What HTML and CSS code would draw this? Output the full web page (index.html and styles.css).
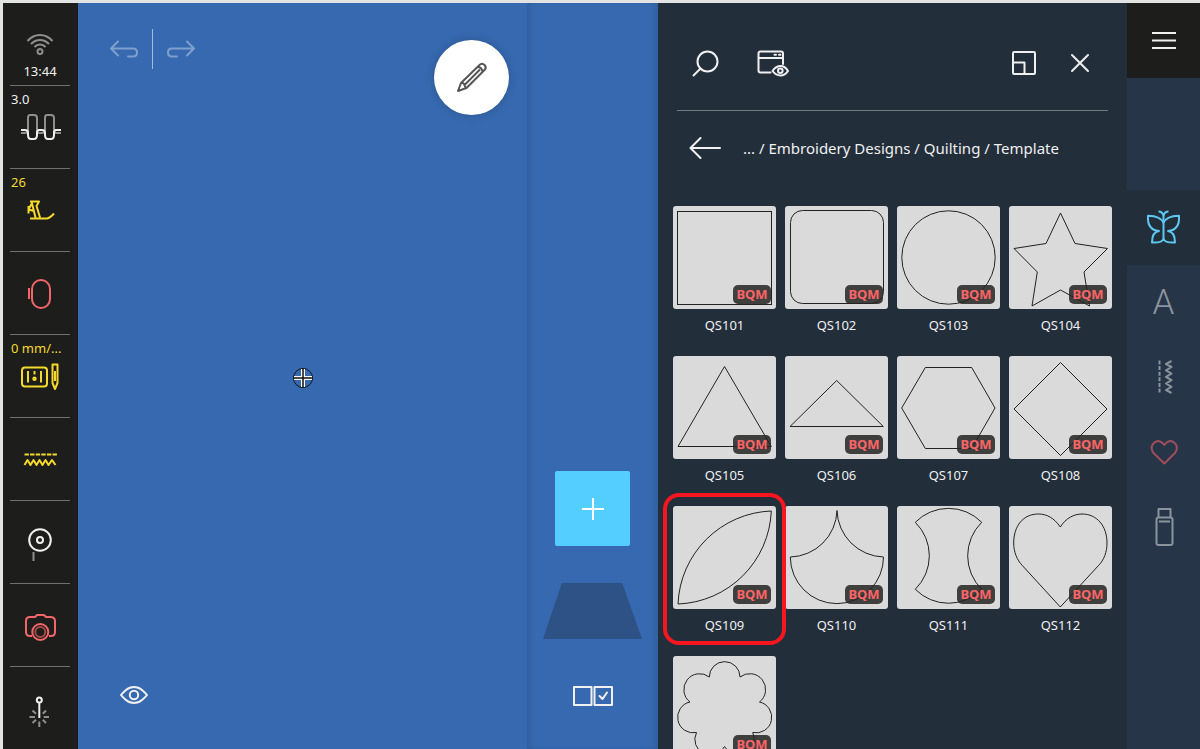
FILE: index.html
```html
<!DOCTYPE html>
<html lang="en">
<head>
    <meta charset="UTF-8">
    <meta name="viewport" content="width=device-width, initial-scale=1.0">
    <title>Embroidery Designs</title>
    <link rel="stylesheet" href="styles.css">
</head>
<body>

<div class="app">
    <!-- Left Sidebar: machine settings -->
    <aside class="settings">
        <button class="setting clock" aria-label="Wi-Fi and time">
            <svg width="28" height="24" viewBox="0 0 28 24">
                <path d="M1.500 8C8.500 0 19.500 0 26.500 8M5 11C10 5.500 18 5.500 23 11M8.500 14C11.500 10.700 16.500 10.700 19.500 14"/>
                <circle cx="14" cy="18.500" r="2.500"/>
            </svg>
            <span>13:44</span>
        </button>
        <button class="setting" aria-label="Thread tension">
            <span class="value">3.0</span>
            <svg width="45" height="46" viewBox="0 0 45 46">
                <path class="dim" d="M3 29H7Q10 29 10 26V14Q10 11 12 11H16Q19 11 19 14V26Q19 29 21 29H24Q27 29 27 26V14Q27 11 29 11H33Q36 11 36 14V26Q36 29 38 29H43"/>
                <path d="M3 26H7Q10 26 10 29V31Q10 35 13 35H16Q19 35 19 31V29Q19 26 21 26H24Q27 26 27 29V31Q27 35 30 35H33Q36 35 36 31V29Q36 26 38 26H43"/>
            </svg>
        </button>
        <button class="setting yellow" aria-label="Presser foot">
            <span class="value">26</span>
            <svg width="45" height="46" viewBox="0 0 45 46">
                <path d="M12 14.500H21L18.500 19L22 30.500M13.500 14.500L17.500 30.500M13.500 17L10.500 22.500L16 24M10.500 19V26.500M12 31.500H29Q32 31 36 26.500"/>
            </svg>
        </button>
        <button class="setting red" aria-label="Bobbin">
            <svg width="45" height="46" viewBox="0 0 45 46">
                <rect x="14" y="10" width="18" height="28" rx="9"/>
                <path d="M11 18V29"/>
            </svg>
        </button>
        <button class="setting yellow" aria-label="Needle and stitch plate">
            <span class="value">0 mm/...</span>
            <svg width="45" height="46" viewBox="0 0 45 46">
                <rect x="4" y="14.500" width="25" height="19" rx="3"/>
                <path d="M10 18V29.500M23 18V29.500M16.500 18V21.500"/>
                <circle cx="16.500" cy="25.700" r="1.200"/>
                <path d="M34.500 11.500H39.500V30L37 36L34.500 30ZM37 18V28"/>
            </svg>
        </button>
        <button class="setting yellow" aria-label="Stitch type">
            <svg width="45" height="46" viewBox="0 0 45 46">
                <path stroke-dasharray="4.400 1.200" d="M6.500 18.500H39"/>
                <path d="M6.500 29L9.500 24L12.500 29L15.500 24L18.500 29L21.500 24L24.500 29L27.500 24L30.500 29L34 24L37.500 29"/>
            </svg>
        </button>
        <button class="setting" aria-label="Thread spool">
            <svg width="45" height="46" viewBox="0 0 45 46">
                <circle cx="22" cy="21" r="10.800"/>
                <circle cx="22" cy="21" r="3"/>
                <path class="dim" d="M15.500 33V42"/>
            </svg>
        </button>
        <button class="setting red" aria-label="Camera">
            <svg width="45" height="46" viewBox="0 0 45 46">
                <path d="M14 34H12Q8 34 8 30V19Q8 15 12 15H17L19 13H26L28 15H32Q37 15 37 19V30Q37 34 33 34H31"/>
                <circle cx="22.300" cy="30" r="8"/>
                <circle class="dim-red" cx="22.300" cy="30" r="5"/>
            </svg>
        </button>
        <button class="setting" aria-label="Laser">
            <svg width="45" height="46" viewBox="0 0 45 46">
                <circle cx="21.300" cy="14" r="2.500"/>
                <path d="M21.300 17V32"/>
                <path class="dim" d="M11.500 31H17M25.700 31H31M21.300 35.500V41M14.500 24.500L18 27.800M28 24.500L24.800 27.800M14.500 37L18 33.800M28 37L24.800 33.800"/>
            </svg>
        </button>
    </aside>

    <!-- Stitch field -->
    <main class="canvas">
        <div class="canvas-top">
            <div class="history">
                <button class="icon-button" aria-label="Undo">
                    <svg width="28" height="18" viewBox="0 0 28 18"><path d="M8 1.500L1 8.500L8 15.500M1 8.500H23Q27 8.500 27 12.500T23 16.500H18"/></svg>
                </button>
                <span class="divider"></span>
                <button class="icon-button" aria-label="Redo">
                    <svg width="28" height="18" viewBox="0 0 28 18"><path d="M20 1.500L27 8.500L20 15.500M27 8.500H5Q1 8.500 1 12.500T5 16.500H10"/></svg>
                </button>
            </div>
            <button class="edit-button" aria-label="Edit">
                <svg width="32" height="32" viewBox="0 0 32 32"><path d="M2 29L5 21L23.500 3Q26 0.500 28.500 3T28.500 8L10.500 26ZM5 21Q8 20.500 8.500 23T10.500 26M21.500 5Q26 5 26.500 10M8.500 23L24 7.500"/></svg>
            </button>
        </div>
        <div class="stage">
            <svg width="20" height="20" viewBox="0 0 20 20">
                <circle cx="10" cy="10" r="9.500" fill="none" stroke="#111" stroke-width="1"/>
                <path d="M10 1V19M1 10H19" stroke="#fff" stroke-width="4"/>
                <path d="M10 1V19M1 10H19" stroke="#111" stroke-width="1.500"/>
            </svg>
        </div>
        <div class="canvas-bottom">
            <button class="icon-button" aria-label="Preview">
                <svg width="28" height="20" viewBox="0 0 28 20">
                    <path d="M1 10Q2.500 8 6 5T14 2T22 5T27 10Q25.500 12 22 15T14 18T6 15T1 10Z"/>
                    <circle cx="14" cy="10" r="4.200"/>
                </svg>
            </button>
        </div>
    </main>

    <!-- Layers -->
    <section class="layers">
        <button class="add-button" aria-label="Add design">
            <svg width="24" height="24" viewBox="0 0 24 24"><path d="M12 1V23M1 12H23"/></svg>
        </button>
        <div class="layer-shape"></div>
        <button class="icon-button select-button" aria-label="Multi select">
            <svg width="40" height="20" viewBox="0 0 40 20"><path d="M1 1H18.500V19H1ZM21.500 1H39V19H21.500ZM26.500 10L29.500 13L34 6.500"/></svg>
        </button>
    </section>

    <!-- Design browser -->
    <section class="browser">
        <header class="browser-top">
            <button class="icon-button" aria-label="Search">
                <svg width="32" height="32" viewBox="0 0 32 32"><circle cx="17.500" cy="14.500" r="10"/><path d="M10.500 21.500L3.500 28.500"/></svg>
            </button>
            <button class="icon-button" aria-label="View options">
                <svg width="32" height="32" viewBox="0 0 32 32">
                    <path d="M13.500 25.500H3.500Q1.500 25.500 1.500 23.500V6.500Q1.500 4.500 3.500 4.500H24Q26 4.500 26 6.500V17M1.500 11H26M17.500 7.800H19M22 7.800H23.500"/>
                    <path d="M15.500 24Q19 19 23.500 19T31 24Q28 28.500 23.500 28.500T15.500 24Z"/>
                    <circle cx="23.300" cy="23.700" r="2.300"/>
                </svg>
            </button>
            <span class="spacer"></span>
            <button class="icon-button" aria-label="Resize panel">
                <svg width="32" height="32" viewBox="0 0 32 32"><rect x="5" y="5" width="22" height="22" rx="1"/><path d="M5 15.500H16.500V27"/></svg>
            </button>
            <button class="icon-button" aria-label="Close">
                <svg width="32" height="32" viewBox="0 0 32 32"><path d="M8 8L24 24M24 8L8 24"/></svg>
            </button>
        </header>
        <nav class="breadcrumb">
            <button class="icon-button" aria-label="Back">
                <svg width="32" height="22" viewBox="0 0 32 22"><path d="M11.500 1L1.500 11L11.500 21M1.500 11H31"/></svg>
            </button>
            <p><a href="#">...</a> / <a href="#">Embroidery Designs</a> / <a href="#">Quilting</a> / <a href="#">Template</a></p>
        </nav>

        <div class="designs">
            <button class="design">
                <span class="thumb"><svg viewBox="0 0 103 103"><rect x="4.500" y="5.500" width="94" height="93"/></svg><span class="badge">BQM</span></span>
                <span class="name">QS101</span>
            </button>
            <button class="design">
                <span class="thumb"><svg viewBox="0 0 103 103"><rect x="5.500" y="4.500" width="93" height="93" rx="12"/></svg><span class="badge">BQM</span></span>
                <span class="name">QS102</span>
            </button>
            <button class="design">
                <span class="thumb"><svg viewBox="0 0 103 103"><circle cx="51.500" cy="51.500" r="46.700"/></svg><span class="badge">BQM</span></span>
                <span class="name">QS103</span>
            </button>
            <button class="design">
                <span class="thumb"><svg viewBox="0 0 103 103"><path d="M51.500 7L66 37.500L98.500 42.500L75 66L80.500 100L51.500 84L23 100L28.300 66L5 42.500L37 37.500Z"/></svg><span class="badge">BQM</span></span>
                <span class="name">QS104</span>
            </button>
            <button class="design">
                <span class="thumb"><svg viewBox="0 0 103 103"><path d="M51.500 10.500L98.300 90.500H5Z"/></svg><span class="badge">BQM</span></span>
                <span class="name">QS105</span>
            </button>
            <button class="design">
                <span class="thumb"><svg viewBox="0 0 103 103"><path d="M51.700 24.500L98.300 70.500H5Z"/></svg><span class="badge">BQM</span></span>
                <span class="name">QS106</span>
            </button>
            <button class="design">
                <span class="thumb"><svg viewBox="0 0 103 103"><path d="M28.300 11.500H74.700L98 52L74.700 92.500H28.300L4.700 52Z"/></svg><span class="badge">BQM</span></span>
                <span class="name">QS107</span>
            </button>
            <button class="design">
                <span class="thumb"><svg viewBox="0 0 103 103"><path d="M51.500 6.500L98 53L51.500 99.500L5 53Z"/></svg><span class="badge">BQM</span></span>
                <span class="name">QS108</span>
            </button>
            <button class="design selected">
                <span class="thumb"><svg viewBox="0 0 103 103"><path d="M98.300 5A97 97 0 0 0 5 98A97 97 0 0 0 98.300 5Z"/></svg><span class="badge">BQM</span></span>
                <span class="name">QS109</span>
            </button>
            <button class="design">
                <span class="thumb"><svg viewBox="0 0 103 103"><path d="M52 4.500A48 48 0 0 0 98.500 51A46.600 46.600 0 0 1 5.300 51A48 48 0 0 0 52 4.500Z"/></svg><span class="badge">BQM</span></span>
                <span class="name">QS110</span>
            </button>
            <button class="design">
                <span class="thumb"><svg viewBox="0 0 103 103"><path d="M18.300 16.300A46.500 46.500 0 0 1 84.700 16.300A47 47 0 0 0 84.700 83.300A46.500 46.500 0 0 1 18.300 83.300A47 47 0 0 0 18.300 16.300Z"/></svg><span class="badge">BQM</span></span>
                <span class="name">QS111</span>
            </button>
            <button class="design">
                <span class="thumb"><svg viewBox="0 0 103 103"><path d="M51.300 21C45 12 38 8 29.500 8C14 8 4.700 20 4.700 37C4.700 46 8 54 13.300 59.500L51.300 101L89.500 59.500C95 54 98 46 98 37C98 20 88 8 73 8C65 8 57 12 51.300 21Z"/></svg><span class="badge">BQM</span></span>
                <span class="name">QS112</span>
            </button>
            <button class="design">
                <span class="thumb"><svg viewBox="0 0 103 103"><path d="M36.300 21A15 15 0 0 1 67 21A15 15 0 0 1 86.500 46A15 15 0 0 1 79.700 76.500A15 15 0 0 1 51.500 90.500A15 15 0 0 1 23.500 76.500A15 15 0 0 1 17 46A15 15 0 0 1 36.300 21Z"/></svg><span class="badge">BQM</span></span>
                <span class="name">QS113</span>
            </button>
        </div>
    </section>

    <!-- Right Sidebar: design categories -->
    <nav class="categories">
        <button class="menu-button" aria-label="Menu">
            <svg width="24" height="18" viewBox="0 0 24 18"><path d="M0 1H24M0 8.500H24M0 16H24"/></svg>
        </button>
        <button class="category active" aria-label="Embroidery designs">
            <svg width="43" height="43" viewBox="0 0 43 43">
                <path d="M16.500 5.500Q20.500 5.500 21.500 10Q22.500 5.500 26.500 5.500M21.500 10V33"/>
                <path d="M21.500 17Q19 10 6 9.700Q5 24 17 25Q10 26 10 36.500Q20 37 21.500 33Q23 37 33 36.500Q33 26 26 25Q38 24 37 9.700Q24 10 21.500 17"/>
            </svg>
        </button>
        <button class="category letters" aria-label="Alphabets">A</button>
        <button class="category" aria-label="Stitches">
            <svg width="43" height="43" viewBox="0 0 43 43">
                <path stroke-dasharray="4 1.600" d="M17.500 4.500V37"/>
                <path d="M29.500 5L24 8L29.500 11L24 14.300L29.500 17.600L24 20.900L29.500 24.200L24 27.500L29.500 30.800L24 34L29.500 37"/>
            </svg>
        </button>
        <button class="category favourite" aria-label="Favourites">
            <svg width="43" height="43" viewBox="0 0 43 43"><path d="M22.300 32.500L11.500 22Q8 17 11 12.800Q16.500 6.500 22.300 14Q28 6.500 33.500 12.800Q36.500 17 33 22Z"/></svg>
        </button>
        <button class="category" aria-label="USB stick">
            <svg width="43" height="43" viewBox="0 0 43 43">
                <rect x="14.500" y="11.500" width="16" height="27.500" rx="2"/>
                <path d="M16.500 11.500V3H28.500V11.500M17 15.500H28"/>
            </svg>
        </button>
    </nav>
</div>

</body>
</html>
```
FILE: styles.css
```css
* {
    box-sizing: border-box;
}
body {
    margin: 0;
    font-family: 'Noto Sans', 'Open Sans', sans-serif;
    font-size: 13px;
    color: #f0f0f0;
    background-color: #e2e3e3;
    overflow: hidden;
}
button {
    padding: 0;
    border: none;
    background: none;
    color: inherit;
    font: inherit;
    cursor: pointer;
}
svg {
    display: block;
    fill: none;
    stroke: currentColor;
    stroke-width: 2;
    stroke-linejoin: round;
}
.app {
    display: grid;
    grid-template-columns: 75px minmax(0, 1fr) 131px 469px 73px;
    height: 100vh;
    padding: 3px 0 0 3px;
}
.icon-button {
    display: flex;
    align-items: center;
    justify-content: center;
    flex-shrink: 0;
}
.icon-button svg {
    stroke-linecap: round;
}

/* Left Sidebar */
.settings {
    display: flex;
    flex-direction: column;
    min-height: 0;
    padding: 0 8px 0 7px;
    background-color: #1d1d1b;
}
.setting {
    position: relative;
    display: flex;
    align-items: center;
    justify-content: center;
    flex-shrink: 0;
    height: 83px;
    border-bottom: 1px solid #70706e;
}
.setting:last-child {
    border-bottom: none;
}
.setting .value {
    position: absolute;
    top: 4px;
    left: 1px;
    line-height: 18px;
}
.clock {
    flex-direction: column;
    justify-content: flex-end;
    gap: 4px;
    padding-bottom: 4px;
    line-height: 20px;
}
.clock svg, .setting .dim {
    stroke: #8f8f8e;
}
.yellow {
    color: #f6d92b;
}
.red {
    color: #f2666a;
}
.dim-red {
    stroke: #a34a4c;
}

/* Stitch field */
.canvas {
    display: flex;
    flex-direction: column;
    min-height: 0;
    background-color: #3769b0;
}
.canvas-top {
    display: flex;
    justify-content: space-between;
    align-items: flex-start;
    padding: 26px 18px 0 32px;
}
.history {
    display: flex;
    align-items: center;
    gap: 14px;
    color: #7f9fcd;
}
.history .divider {
    width: 1px;
    height: 40px;
    background-color: #a3b9da;
}
.edit-button {
    display: flex;
    align-items: center;
    justify-content: center;
    width: 75px;
    height: 75px;
    margin-top: 11px;
    border-radius: 50%;
    background-color: #fff;
    color: #555;
    box-shadow: 0 0 10px rgba(0, 0, 0, 0.2);
}
.stage {
    display: flex;
    align-items: center;
    justify-content: center;
    flex: 1;
}
.canvas-bottom {
    display: flex;
    align-items: center;
    height: 108px;
    padding-left: 42px;
}

/* Layers */
.layers {
    display: flex;
    flex-direction: column;
    align-items: center;
    justify-content: flex-end;
    gap: 37px;
    padding-bottom: 33px;
    background-color: #3769b0;
    box-shadow: inset 5px 0 6px -3px rgba(0, 0, 0, 0.12), inset -5px 0 6px -3px rgba(0, 0, 0, 0.12);
}
.add-button {
    display: flex;
    align-items: center;
    justify-content: center;
    width: 75px;
    height: 75px;
    border-radius: 2px;
    background-color: #53ceff;
    color: #fff;
}
.layer-shape {
    width: 99px;
    height: 56px;
    background-color: #2e5285;
    clip-path: polygon(19% 0, 80% 0, 100% 100%, 0 100%);
}
.select-button {
    height: 40px;
}

/* Design browser */
.browser {
    display: flex;
    flex-direction: column;
    min-height: 0;
    background-color: #232e3b;
}
.browser-top {
    display: flex;
    align-items: center;
    gap: 24px;
    flex-shrink: 0;
    height: 108px;
    margin: 0 19px;
    padding: 13px 12px 0 13px;
    border-bottom: 1px solid #727b80;
}
.browser-top .icon-button:first-child {
    margin-right: 11px;
}
.spacer {
    flex: 1;
}
.breadcrumb {
    display: flex;
    align-items: center;
    gap: 22px;
    flex-shrink: 0;
    height: 74px;
    padding-left: 31px;
    font-size: 15px;
}
.breadcrumb p {
    margin: 0;
    white-space: nowrap;
}
.breadcrumb a {
    color: inherit;
    text-decoration: none;
}
.designs {
    display: grid;
    grid-template-columns: repeat(4, 1fr);
    gap: 14px 9px;
    padding: 21px 15px 0;
    overflow-y: auto;
    scrollbar-width: none;
}
.design {
    position: relative;
    display: flex;
    flex-direction: column;
}
.thumb {
    position: relative;
    width: 100%;
    border-radius: 3px;
    background-color: #dadada;
}
.thumb svg {
    width: 100%;
    stroke: #222;
    stroke-width: 1;
    stroke-linejoin: miter;
}
.badge {
    position: absolute;
    right: 5px;
    bottom: 5px;
    width: 38px;
    border-radius: 5px;
    background-color: rgba(35, 35, 33, 0.85);
    color: #ff6468;
    font-weight: bold;
    line-height: 19px;
    text-align: center;
}
.name {
    width: 100%;
    line-height: 33px;
    text-align: center;
}
/* Ring around the chosen design */
.design.selected::after {
    content: '';
    position: absolute;
    z-index: 1;
    top: -13px;
    right: -10px;
    bottom: -3px;
    left: -10px;
    border: 4px solid #f5161f;
    border-radius: 16px;
}

/* Right Sidebar */
.categories {
    display: flex;
    flex-direction: column;
    min-height: 0;
    background-color: #263548;
}
.menu-button, .category {
    display: flex;
    align-items: center;
    justify-content: center;
    flex-shrink: 0;
    height: 75px;
}
.menu-button {
    margin-bottom: 112px;
    background-color: #1d1d1b;
}
.category {
    color: #8b939d;
}
.category.active {
    background-color: #232e3b;
    color: #5cc8f0;
}
.category.letters {
    font-family: Roboto, 'Noto Sans', sans-serif;
    font-size: 35px;
    font-weight: 300;
}
.category.favourite {
    color: #9e4f5b;
}
```
